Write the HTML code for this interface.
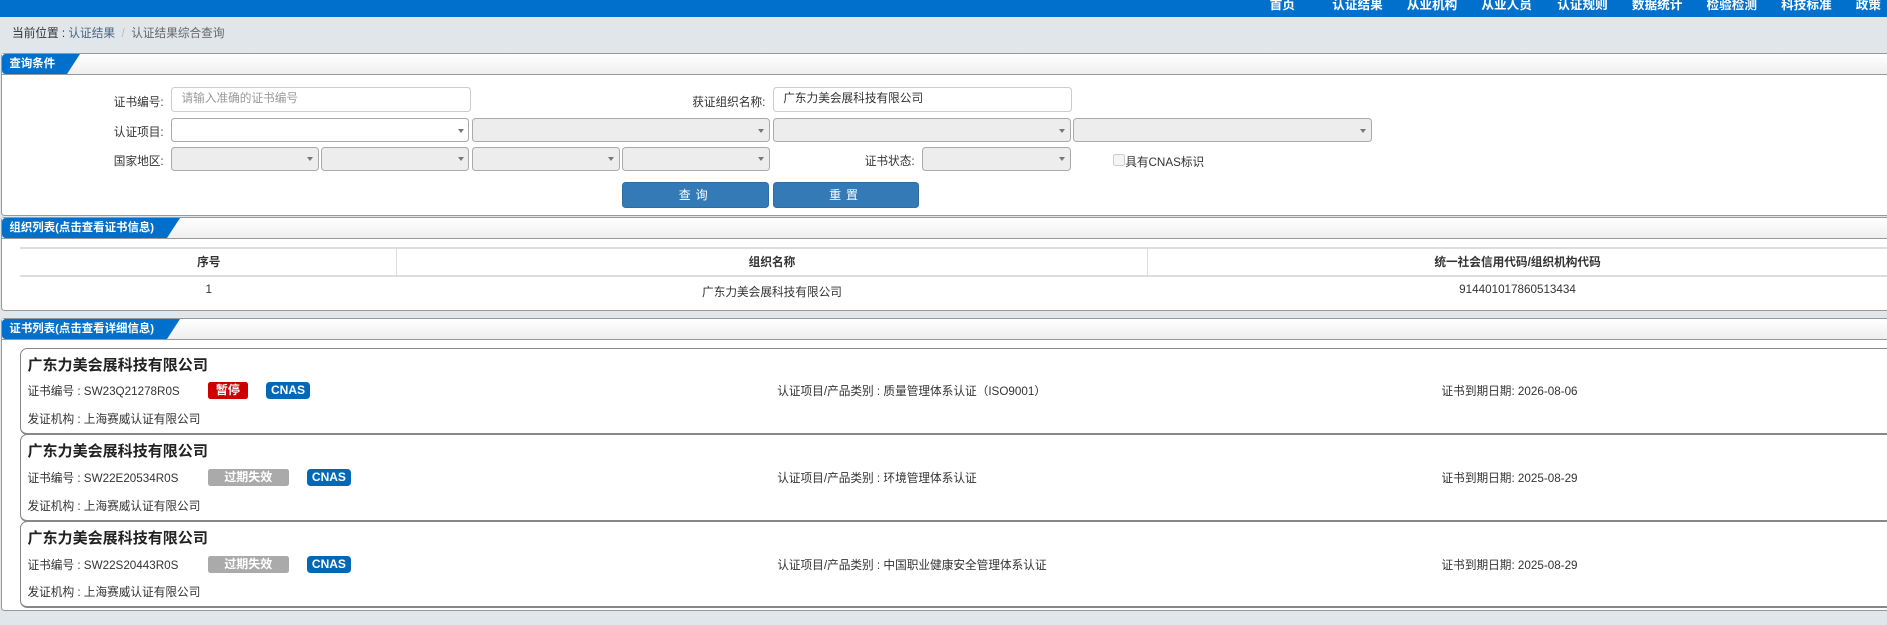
<!DOCTYPE html>
<html><head><meta charset="utf-8">
<style>
html,body{margin:0;padding:0;}
body{width:1568px;height:519px;overflow:hidden;zoom:1.20344;background:#e1e6ea;font-family:"Liberation Sans","Noto Sans CJK SC",sans-serif;font-size:9.7px;color:#333;position:relative;}
.a{position:absolute;}
.top{left:0;top:0;width:1568px;height:14px;background:#0070cc;overflow:hidden;}
.top span{position:absolute;top:-5px;color:#fff;font-weight:bold;font-size:10.5px;}
.panel{left:1px;width:1580px;background:#fff;border:1px solid #999;border-right:none;border-radius:3px 0 0 3px;}
.ph{position:absolute;left:0;top:0;right:0;height:17px;background:linear-gradient(#fff,#efefef);border-bottom:1px solid #999;}
.tab{position:absolute;left:0;top:0;height:17px;background:#0070cc;color:#fff;font-weight:bold;font-size:9.5px;line-height:17px;padding-left:6px;box-sizing:border-box;border-radius:3px 0 0 3px;}
.tab:after{content:"";position:absolute;right:-11px;top:0;border-left:11px solid #0070cc;border-bottom:17px solid transparent;}
.lbl{font-size:9.7px;color:#333;text-align:right;}
.in{border:1px solid #ccc;border-radius:3px;background:#fff;height:21px;box-sizing:border-box;font-size:9.7px;line-height:19px;padding-left:8px;}
.sel{border:1px solid #aaa;border-radius:3px;background:#ededed;height:20px;box-sizing:border-box;}
.sel:after{content:"";position:absolute;right:4px;top:8px;border-left:3px solid transparent;border-right:3px solid transparent;border-top:4px solid #777;}
.btn{background:#337ab7;border:1px solid #2e6da4;border-radius:3px;color:#fff;text-align:center;line-height:20px;height:22px;box-sizing:border-box;font-size:10px;letter-spacing:4px;}
.th{font-weight:bold;font-size:9.7px;text-align:center;}
.card{left:17px;width:1570px;height:70px;border:1px solid #888;border-bottom:2px solid #888;border-right:none;border-radius:6px 0 0 6px;background:#fff;}
.card .t{position:absolute;left:5px;top:4px;font-size:12.5px;font-weight:bold;color:#222;}
.card .r{position:absolute;top:28px;font-size:9.7px;color:#333;}
.card .r3{position:absolute;left:5px;top:51px;font-size:9.7px;color:#333;}
.bd{position:absolute;top:28px;height:14px;line-height:14px;border-radius:2px;color:#fff;font-size:10px;font-weight:bold;text-align:center;}
</style></head><body>
<div class="a top">
<span style="left:1055px">首页</span><span style="left:1107px">认证结果</span><span style="left:1169px">从业机构</span><span style="left:1231px">从业人员</span><span style="left:1294px">认证规则</span><span style="left:1356px">数据统计</span><span style="left:1418px">检验检测</span><span style="left:1480px">科技标准</span><span style="left:1542px">政策法规</span>
</div>
<div class="a" style="left:10px;top:20px;font-size:9.7px;color:#333">当前位置 : <span style="color:#48657f">认证结果</span> <span style="color:#bbb">&nbsp;/&nbsp;</span> <span style="color:#666">认证结果综合查询</span></div>

<div class="a panel" style="top:44px;height:134px;">
<div class="ph"><div class="tab" style="width:54px">查询条件</div></div>
</div>
<div class="a lbl" style="left:60px;width:76px;top:77px">证书编号:</div>
<div class="a in" style="left:142px;top:72px;width:249px;color:#999">请输入准确的证书编号</div>
<div class="a lbl" style="left:500px;width:136px;top:77px">获证组织名称:</div>
<div class="a in" style="left:642px;top:72px;width:249px;color:#333">广东力美会展科技有限公司</div>

<div class="a lbl" style="left:60px;width:76px;top:102px">认证项目:</div>
<div class="a sel" style="left:142px;top:98px;width:248px;background:#fff"></div>
<div class="a sel" style="left:392px;top:98px;width:248px"></div>
<div class="a sel" style="left:642px;top:98px;width:248px"></div>
<div class="a sel" style="left:892px;top:98px;width:248px"></div>

<div class="a lbl" style="left:60px;width:76px;top:126px">国家地区:</div>
<div class="a sel" style="left:142px;top:122px;width:123px"></div>
<div class="a sel" style="left:267px;top:122px;width:123px"></div>
<div class="a sel" style="left:392px;top:122px;width:123px"></div>
<div class="a sel" style="left:517px;top:122px;width:123px"></div>
<div class="a lbl" style="left:680px;width:80px;top:126px">证书状态:</div>
<div class="a sel" style="left:766px;top:122px;width:124px"></div>
<div class="a" style="left:925px;top:128px;width:8px;height:8px;border:1px solid #ccc;border-radius:2px;background:#f5f5f5"></div>
<div class="a" style="left:935px;top:127px;font-size:9.7px">具有CNAS标识</div>
<div class="a btn" style="left:517px;top:151px;width:122px">查询</div>
<div class="a btn" style="left:642px;top:151px;width:122px">重置</div>

<div class="a panel" style="top:180px;height:77px;">
<div class="ph"><div class="tab" style="width:137px">组织列表(点击查看证书信息)</div></div>
</div>
<div class="a" style="left:17px;top:205px;width:1560px;height:22px;border-top:2px solid #ddd;border-bottom:2px solid #ddd"></div>
<div class="a" style="left:329px;top:205px;width:1px;height:24px;background:#ddd"></div>
<div class="a" style="left:953px;top:205px;width:1px;height:24px;background:#ddd"></div>
<div class="a th" style="left:18px;width:311px;top:210px">序号</div>
<div class="a th" style="left:330px;width:623px;top:210px">组织名称</div>
<div class="a th" style="left:954px;width:614px;top:210px">统一社会信用代码/组织机构代码</div>
<div class="a" style="left:18px;width:311px;top:235px;text-align:center">1</div>
<div class="a" style="left:330px;width:623px;top:235px;text-align:center">广东力美会展科技有限公司</div>
<div class="a" style="left:954px;width:614px;top:235px;text-align:center">914401017860513434</div>

<div class="a panel" style="top:264px;height:242px;">
<div class="ph"><div class="tab" style="width:137px">证书列表(点击查看详细信息)</div></div>
</div>

<div class="a card" style="top:289px">
<div class="t">广东力美会展科技有限公司</div>
<div class="r" style="left:5px">证书编号 : SW23Q21278R0S</div>
<div class="bd" style="left:155px;width:33px;background:#cc0000">暂停</div>
<div class="bd" style="left:203px;width:37px;background:#0068b7;border-radius:3px">CNAS</div>
<div class="r" style="left:628px">认证项目/产品类别 : 质量管理体系认证（ISO9001）</div>
<div class="r" style="left:1180px">证书到期日期: 2026-08-06</div>
<div class="r3">发证机构 : 上海赛威认证有限公司</div>
</div>
<div class="a card" style="top:361px">
<div class="t">广东力美会展科技有限公司</div>
<div class="r" style="left:5px">证书编号 : SW22E20534R0S</div>
<div class="bd" style="left:155px;width:67px;background:#aaa">过期失效</div>
<div class="bd" style="left:237px;width:37px;background:#0068b7;border-radius:3px">CNAS</div>
<div class="r" style="left:628px">认证项目/产品类别 : 环境管理体系认证</div>
<div class="r" style="left:1180px">证书到期日期: 2025-08-29</div>
<div class="r3">发证机构 : 上海赛威认证有限公司</div>
</div>
<div class="a card" style="top:433px">
<div class="t">广东力美会展科技有限公司</div>
<div class="r" style="left:5px">证书编号 : SW22S20443R0S</div>
<div class="bd" style="left:155px;width:67px;background:#aaa">过期失效</div>
<div class="bd" style="left:237px;width:37px;background:#0068b7;border-radius:3px">CNAS</div>
<div class="r" style="left:628px">认证项目/产品类别 : 中国职业健康安全管理体系认证</div>
<div class="r" style="left:1180px">证书到期日期: 2025-08-29</div>
<div class="r3">发证机构 : 上海赛威认证有限公司</div>
</div>
</body></html>
